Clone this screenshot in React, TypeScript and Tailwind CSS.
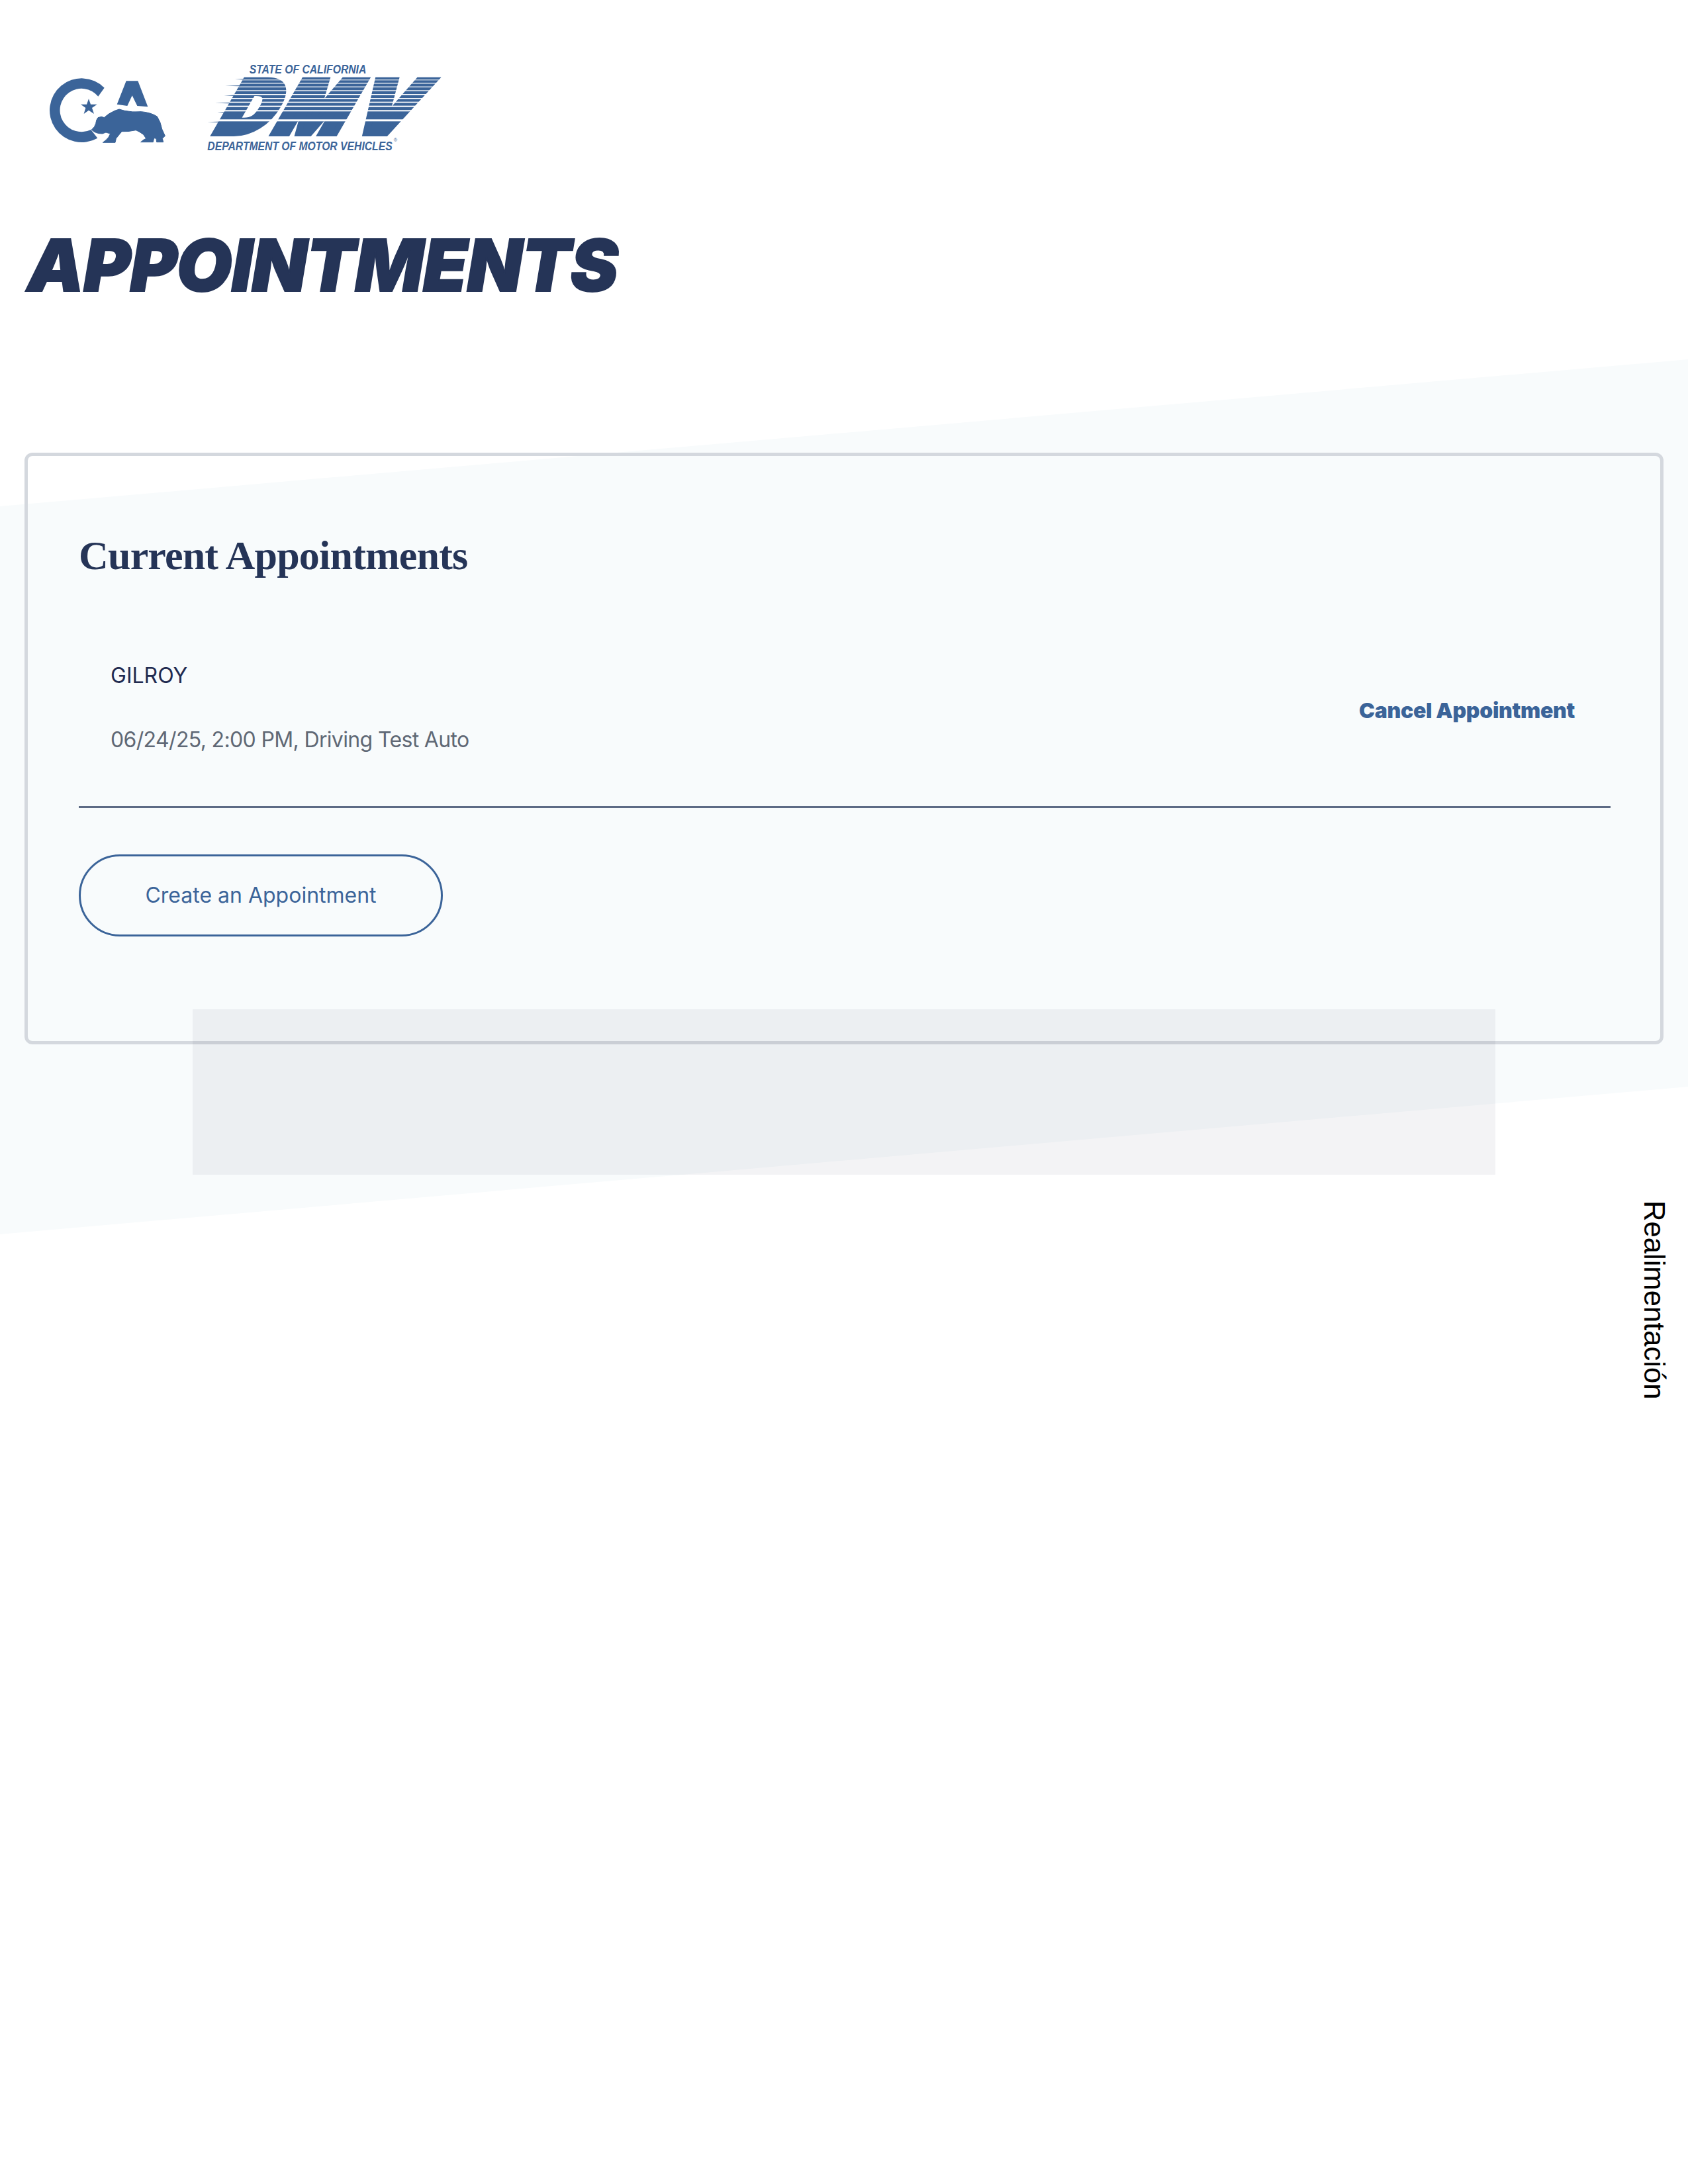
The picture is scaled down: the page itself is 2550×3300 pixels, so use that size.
import React from "react";

const blue = "#3b6499";

function CaLogo() {
  return (
    <svg viewBox="0 0 630 360" className="w-[210px] h-[120px] shrink-0 mt-[25px]" fill={blue}>
      <path d="M293 68 A145 145 0 1 0 262 296 L232 258 A98 98 0 1 1 265 107 Z" />
      <polygon points="222,118 231,143 260,143 237,159 246,186 222,170 200,186 208,159 186,143 213,143" />
      <path d="M392 37 H445 L490 154 L442 150 L419 103 L397 150 L350 143 Z" />
      <path
        stroke={blue}
        strokeWidth="3"
        strokeLinejoin="round"
        d="M235 258 Q250 246 254 230 Q256 212 264 203 L280 199 L292 203 Q312 184 340 172 L360 165 L385 172 Q420 180 460 176 Q505 180 532 198 Q548 222 554 255 L568 286 L556 298 L560 314 L530 314 L528 298 L518 296 L514 314 L458 314 L470 304 L482 298 L470 280 Q452 266 436 260 Q400 268 372 266 L362 278 L346 298 L342 316 L286 316 L300 305 L312 292 L320 276 L300 270 L284 276 Q252 276 235 258 Z"
      />
    </svg>
  );
}

function DmvLogo() {
  const stripes: [number, number][] = [
    [106, 3], [120, 4], [137, 4], [154, 4], [171, 5], [189, 5], [206, 5], [224, 6], [244, 6], [286, 9],
  ];
  const speed: [number, number, number][] = [
    [104, 165, 205], [134, 120, 190], [178, 115, 165], [212, 75, 140], [256, 85, 115], [298, 40, 90],
  ];
  const letter = {
    fontFamily: "Inter, sans-serif",
    fontWeight: 900,
    fontSize: 327,
    lengthAdjust: "spacingAndGlyphs",
    stroke: blue,
    strokeWidth: 30,
    strokeLinejoin: "miter",
  } as const;
  return (
    <svg viewBox="0 0 1140 450" className="w-[380px] h-[150px] shrink-0 ml-[30px] overflow-visible" fill={blue}>
      <text x="230" y="77" fontFamily="'Liberation Sans', sans-serif" fontWeight="700" fontStyle="italic" fontSize="55" textLength="530" lengthAdjust="spacingAndGlyphs">
        STATE OF CALIFORNIA
      </text>
      <g transform="translate(0 347) skewX(-30)">
        <text x="60" y="0" textLength="240" {...letter}>D</text>
        <text x="325" y="0" textLength="310" {...letter}>M</text>
        <text x="670" y="0" textLength="270" {...letter}>V</text>
      </g>
      {stripes.map(([y, h]) => (
        <rect key={y} x="0" y={y} width="1140" height={h} fill="#ffffff" />
      ))}
      {speed.map(([y, a, b]) => (
        <polygon key={y} points={`${a},${y} ${b},${y - 2} ${b},${y + 2}`} />
      ))}
      <text x="40" y="425" fontFamily="'Liberation Sans', sans-serif" fontWeight="700" fontStyle="italic" fontSize="55" textLength="838" lengthAdjust="spacingAndGlyphs">
        DEPARTMENT OF MOTOR VEHICLES
      </text>
      <text x="884" y="388" fontFamily="'Liberation Sans', sans-serif" fontSize="22">
        ®
      </text>
    </svg>
  );
}

export default function App() {
  return (
    <div className="relative w-full min-h-[3300px] overflow-hidden bg-white font-['Inter',sans-serif]">
      <div className="absolute left-0 top-[543px] h-[1322px] w-full bg-[#f8fbfc] [clip-path:polygon(0_222px,100%_0,100%_1099px,0_100%)]" />

      <div className="relative flex flex-col pb-[100px]">
        <header className="flex items-start pl-[60px] pt-[85px]">
          <CaLogo />
          <DmvLogo />
        </header>

        <h1 className="ml-[41px] mt-[111px] h-[110px] text-[108.5px] leading-[110px] font-black italic tracking-[-1px] text-[#253457] [-webkit-text-stroke:2px_#253457]">
          APPOINTMENTS
        </h1>

        <section className="mx-[37px] mt-[228px] h-[894px] rounded-[12px] border-[5px] border-[#d4d8de] pl-[77px] pr-[75px]">
          <h2 className="mt-[115px] font-['Liberation_Serif',serif] text-[62px] leading-[70px] font-bold tracking-[-0.8px] text-[#253457]">
            Current Appointments
          </h2>

          <div className="mt-[127px] flex items-center justify-between border-b-[3px] border-[#5d6b85] pb-[81px] pl-[48px] pr-[54px]">
            <div className="flex flex-col gap-[58px]">
              <div className="text-[32px] leading-[39px] text-[#1f2a50]">GILROY</div>
              <div className="text-[32px] leading-[39px] tracking-[-0.65px] text-[#5f6875]">06/24/25, 2:00 PM, Driving Test Auto</div>
            </div>
            <a className="mt-[10px] text-[32px] leading-[40px] font-black tracking-[-0.3px] text-[#3b6499]">Cancel Appointment</a>
          </div>

          <button className="mt-[70px] flex h-[124px] w-[550px] items-center justify-center rounded-full border-[3px] border-[#3b6499] text-[32px] text-[#3b6499]">
            Create an Appointment
          </button>
        </section>
      </div>

      <div className="absolute left-[291px] top-[1525px] h-[250px] w-[1968px] bg-[#373758]/[0.06]" />

      <div className="absolute left-[2479px] top-[1814px] font-['Liberation_Sans',sans-serif] text-[43.6px] leading-[40px] text-black [writing-mode:vertical-rl]">
        Realimentación
      </div>
    </div>
  );
}
